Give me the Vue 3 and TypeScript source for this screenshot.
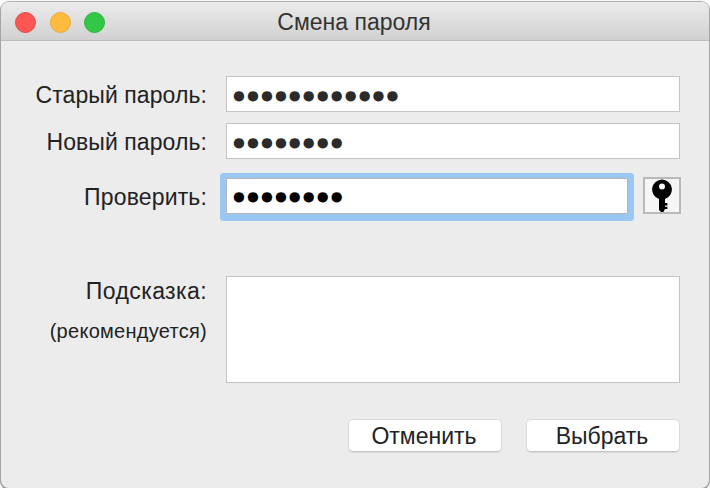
<script setup lang="ts">
const oldPass = '●'.repeat(12)
const newPass = '●'.repeat(8)
</script>

<template>
  <div class="window">
    <header class="titlebar">
      <div class="lights">
        <span class="light red"></span>
        <span class="light yellow"></span>
        <span class="light green"></span>
      </div>
      <div class="title">Смена пароля</div>
    </header>
    <main class="form">
      <div class="row row-old">
        <label class="label">Старый пароль:</label>
        <div class="field wide"><span class="dots soft">{{ oldPass }}</span></div>
      </div>
      <div class="row row-new">
        <label class="label">Новый пароль:</label>
        <div class="field wide"><span class="dots soft">{{ newPass }}</span></div>
      </div>
      <div class="row row-verify">
        <label class="label verify">Проверить:</label>
        <div class="field focused"><span class="dots">{{ newPass }}</span></div>
        <button class="key" type="button" aria-label="key">
          <svg width="22" height="34" viewBox="0 0 22 34">
            <path fill="#000" fill-rule="evenodd" d="M11 0.5a10 10 0 0 1 3 19.5V24h2.4v2.4H14v1.4h2.4v2.2H14l-1.6 3h-2.4L8 31V20A10 10 0 0 1 11 0.5Zm0 4a3 3 0 1 0 0 6a3 3 0 0 0 0-6Z"/>
          </svg>
        </button>
      </div>
      <div class="row row-hint">
        <div class="hint-labels">
          <div class="label hint">Подсказка:</div>
          <div class="label small">(рекомендуется)</div>
        </div>
        <div class="field wide tall"></div>
      </div>
      <div class="actions">
        <button class="btn" type="button">Отменить</button>
        <button class="btn" type="button">Выбрать</button>
      </div>
    </main>
  </div>
</template>

<style>
html, body { margin: 0; background: #fff; }
</style>

<style scoped>
.window {
  box-sizing: border-box;
  width: 708px;
  height: 486px;
  margin: 2px 0 0 1px;
  background: #ececec;
  border-radius: 8px;
  overflow: hidden;
  box-shadow: 0 0 1px 1px #a8a8a8, 0 1px 0 1px #8e8e8e;
  font-family: "Liberation Sans", Arial, sans-serif;
  color: #222;
}
.titlebar {
  position: relative;
  box-sizing: border-box;
  height: 39px;
  display: flex;
  align-items: center;
  justify-content: center;
  background: linear-gradient(#ebebeb, #d1d1d1);
  border-bottom: 1px solid #bdbdbd;
}
.lights {
  position: absolute;
  left: 14px;
  top: 10px;
  display: flex;
  gap: 13.5px;
}
.light {
  box-sizing: border-box;
  width: 21px;
  height: 21px;
  border-radius: 50%;
}
.red { background: #fc5753; border: 1px solid #e5484a; }
.yellow { background: #fdbc40; border: 1px solid #e6a93a; }
.green { background: #33c748; border: 1px solid #2cb23e; }
.title {
  font-size: 23px;
  color: #333;
  margin: 2px 2px 0 0;
}
.form {
  display: flex;
  flex-direction: column;
  padding-top: 35px;
}
.row {
  display: flex;
  align-items: center;
}
.row-new { margin-top: 11px; }
.row-verify { margin-top: 18px; }
.row-hint { margin-top: 62px; align-items: flex-start; }
.label {
  width: 206px;
  margin-right: 19px;
  flex: none;
  text-align: right;
  font-size: 23px;
  line-height: 30px;
  letter-spacing: 0.08px;
}
.row > .label { padding-top: 2px; }
.verify { letter-spacing: 0.15px; }
.hint { letter-spacing: 0.4px; }
.small {
  font-size: 20px;
  letter-spacing: 0.27px;
  margin-top: 10px;
}
.hint-labels { flex: none; width: 206px; margin-right: 19px; }
.field {
  box-sizing: border-box;
  height: 36px;
  background: #fff;
  border: 1px solid #c4c4c4;
  display: flex;
  align-items: center;
  padding-left: 6px;
}
.wide { width: 454px; }
.tall { height: 107px; }
.focused {
  width: 402px;
  border-color: #b5b5b5;
  border-radius: 1px;
  box-shadow: 0 1px 0 6px #9bc7f3;
}
.dots {
  font-family: "DejaVu Sans", sans-serif;
  font-size: 13.6px;
  letter-spacing: 2.1px;
  color: #000;
  line-height: 1;
  padding-top: 3px;
}
.soft { color: #2b2b2b; }
.key {
  box-sizing: border-box;
  width: 38px;
  height: 37px;
  margin-left: 15px;
  padding: 0;
  background: #f6f6f6;
  border: 2px solid #b9b9b9;
  display: flex;
  align-items: center;
  justify-content: center;
}
.key svg { display: block; }
.actions {
  display: flex;
  justify-content: flex-start;
  gap: 24px;
  margin-top: 36px;
  padding-left: 347px;
}
.btn {
  box-sizing: border-box;
  width: 154px;
  height: 33px;
  padding: 2px 2px 0 0;
  background: #fff;
  border: 1px solid #dcdcdc;
  border-bottom-color: #c6c6c6;
  border-radius: 5px;
  font-family: inherit;
  font-size: 23px;
  color: #222;
  box-shadow: 0 1px 1px rgba(0, 0, 0, 0.08);
}
</style>
